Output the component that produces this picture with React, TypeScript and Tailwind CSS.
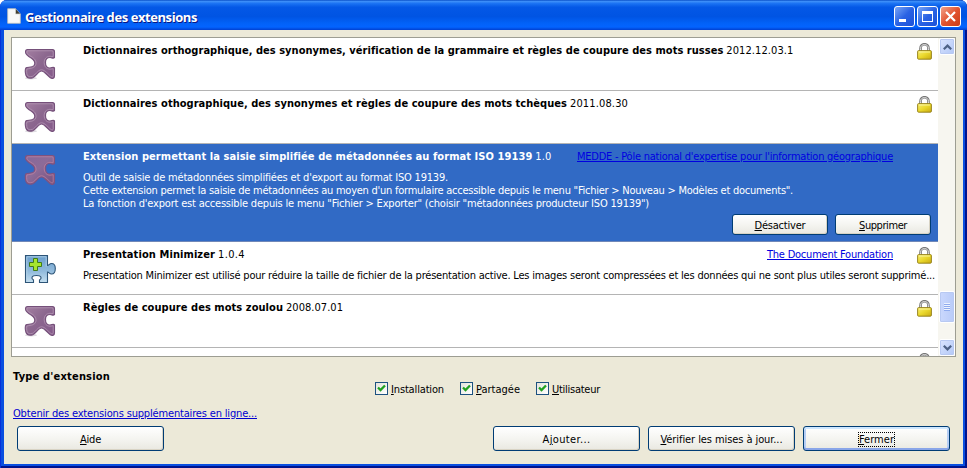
import { useLayoutEffect, useRef, useState, type ReactNode } from 'react';

/** Single line of text whose letter spacing is adjusted so that it spans `width` pixels. */
function Fit({ width, className = '', children }: { width: number; className?: string; children: ReactNode }) {
  const ref = useRef<HTMLSpanElement>(null);
  const [spacing, setSpacing] = useState(0);
  useLayoutEffect(() => {
    const el = ref.current;
    if (!el) return;
    const count = (el.textContent ?? '').length;
    setSpacing((width - el.getBoundingClientRect().width) / count);
  }, [width]);
  return (
    <span ref={ref} className={`inline-block whitespace-pre ${className}`} style={{ letterSpacing: `${spacing}px` }}>
      {children}
    </span>
  );
}

function PurplePuzzle({ selected = false }: { selected?: boolean }) {
  const id = selected ? 'plum-sel' : 'plum';
  return (
    <svg width="32" height="32" viewBox="0 0 32 32" className="block">
      <defs>
        <linearGradient id={id} x1="0" y1="0" x2="1" y2="1">
          <stop offset="0" stopColor={selected ? '#87689a' : '#a47fa2'} />
          <stop offset=".45" stopColor={selected ? '#8d6b98' : '#8c688f'} />
          <stop offset="1" stopColor={selected ? '#75517f' : '#84598a'} />
        </linearGradient>
      </defs>
      {!selected && <ellipse cx="7" cy="30.200" rx="6" ry="1.200" fill="#dedbe0" />}
      <path
        d="M3.500 1.500H28.500Q30.500 1.500 30.500 3.500V9.500C29 11 28 9.500 26 9.500C23 9.500 21.500 11.500 21.500 14.500C21.500 18 23.500 20 26 20C28 20 29 18.500 30.500 19.800V28C30.500 31 27.800 31 26 29.500C23 27.300 20 23 17.500 23C14.500 23 12 28.300 9 29.600C6 30.500 3 30 2 27.500C1 25 1 20.800 2 19.800C4 18.800 8 19.800 10 17.500C12 15 10 11.800 7.500 10.200C4 8.300 1.500 6 1.500 4Q1.500 1.500 3.500 1.500Z"
        fill={`url(#${id})`}
        stroke={selected ? '#80527e' : '#75507a'}
        strokeWidth="1.100"
      />
      <path
        d="M4.200 2.800H28Q29.200 2.800 29.200 4V8.500C28.500 8.900 27.500 8.300 26 8.300C22.300 8.300 20.200 11 20.200 14.500C20.200 18.800 22.800 21.200 26 21.200C27.500 21.200 28.500 20.700 29.200 20.700V28C29.200 29.300 27.800 29 26.800 28.300C24 26.300 21 21.800 17.500 21.800C13.800 21.800 11.300 27.200 8.500 28.300C6 29 4 28.700 3.200 27C2.500 25 2.500 21.800 2.900 21C5 20.300 9 20.800 11 18.300C13.500 14.800 11.300 11 8.200 9.100C5 7.300 2.800 5.500 2.800 4.200Q2.800 2.800 4.200 2.800Z"
        fill="none"
        stroke={selected ? '#ba7f9d' : '#b294b2'}
        strokeWidth=".8"
      />
    </svg>
  );
}

function BluePuzzle() {
  return (
    <svg width="32" height="32" viewBox="0 0 32 32" className="block">
      <defs>
        <linearGradient id="sky" x1="0" y1="0" x2="0" y2="1">
          <stop offset="0" stopColor="#699dcc" />
          <stop offset=".6" stopColor="#94bcdd" />
          <stop offset="1" stopColor="#c4dff0" />
        </linearGradient>
      </defs>
      <path
        d="M1.500 3.500H23.500V13.500C25 13.500 25.300 11.500 27.500 11.500C30 11.500 31.300 13.500 31.300 16.500C31.300 20 30 22 27.500 22C25.300 22 25 20 23.500 20V30.500H15.500V28C18 26.500 18 23.500 12.500 23.500C7 23.500 7 26.500 9.500 28V30.500H1.500Z"
        fill="url(#sky)"
        stroke="#2d5477"
        strokeWidth="1.100"
      />
      <path d="M2.800 29.300V4.800H22.200V14.700" fill="none" stroke="#b9d5ea" strokeWidth=".8" />
      <path d="M9.500 6.500H13.500V10.500H17.500V14.500H13.500V18.500H9.500V14.500H5.500V10.500H9.500Z" fill="#a7e52f" stroke="#417c18" strokeWidth="1" />
    </svg>
  );
}

function Lock() {
  return (
    <svg width="15" height="17" viewBox="0 0 15 17" className="block">
      <defs>
        <linearGradient id="gold" x1="0" y1="0" x2="1" y2="1">
          <stop offset="0" stopColor="#f8ee75" />
          <stop offset=".5" stopColor="#ead82c" />
          <stop offset="1" stopColor="#c9aa12" />
        </linearGradient>
      </defs>
      <path d="M3.500 8V5.500C3.500 -.2 11.500 -.2 11.500 5.500V8" fill="none" stroke="#777" strokeWidth="2.600" />
      <path d="M3.500 8V5.500C3.500 .2 11.500 .2 11.500 5.500V8" fill="none" stroke="#dedede" strokeWidth="1" />
      <rect x=".6" y="7.600" width="13.800" height="8.600" rx="1" fill="url(#gold)" stroke="#8f7a14" strokeWidth=".9" />
      <path d="M2 9H13" stroke="#fdf9b5" strokeWidth=".8" />
    </svg>
  );
}

type RowProps = {
  height: string;
  title: string;
  titleWidth: number;
  version: string;
  versionWidth: number;
  link?: string;
  linkWidth?: number;
  locked?: boolean;
  selected?: boolean;
  icon: ReactNode;
  children?: ReactNode;
};

function Row({ height, title, titleWidth, version, versionWidth, link, linkWidth = 0, locked = true, selected = false, icon, children }: RowProps) {
  return (
    <div className={`flex shrink-0 border-b ${height} ${selected ? 'border-[#7088b8] bg-[#316ac5] text-white' : 'border-[#b4b4b4] bg-white'}`}>
      <div className="w-[71px] shrink-0 pt-[10px] pl-3">{icon}</div>
      <div className="relative w-[855px] shrink-0">
        <div className="flex h-[26px] pt-[6px] leading-[14px]">
          <Fit width={titleWidth} className="font-bold">{title}</Fit>
          <Fit width={versionWidth} className="ml-[3px]">{version}</Fit>
          <div className="ml-auto flex pr-[45px]">
            {link && <Fit width={linkWidth} className="text-[#0000e0] underline">{link}</Fit>}
          </div>
        </div>
        {locked && <div className="absolute top-[5px] right-[6px]"><Lock /></div>}
        {children}
      </div>
    </div>
  );
}

function XpButton({ size, focused = false, children }: { size: string; focused?: boolean; children: ReactNode }) {
  return (
    <button
      className={`flex items-center justify-center rounded-[3px] border border-[#003c74] bg-linear-to-b from-white via-[#f5f5f1] to-[#e9e8e1] pt-px ${size} ${
        focused ? 'shadow-[inset_0_2px_0_#cee7ff,inset_0_-2px_0_#89a5e8,inset_2px_0_0_#b6cef4,inset_-2px_0_0_#b6cef4]' : 'shadow-[inset_-1px_-1px_0_#d8d3c4]'
      }`}
    >
      {children}
    </button>
  );
}

function Check({ label, first, width }: { label: string; first: string; width: number }) {
  return (
    <label className="flex items-center">
      <span className="mr-[3px] flex h-[13px] w-[13px] items-center justify-center border border-[#1c5180] bg-linear-to-br from-[#e3e3dc] to-white">
        <svg width="9" height="9" viewBox="0 0 9 9">
          <path d="M1 3.500L3.500 6L8 1.500" fill="none" stroke="#21a121" strokeWidth="2.300" />
        </svg>
      </span>
      <Fit width={width} className="pt-px"><u>{first}</u>{label}</Fit>
    </label>
  );
}

function ScrollButton({ down = false }: { down?: boolean }) {
  return (
    <div className="flex h-[17px] w-[16px] items-center justify-center rounded-[2px] border border-white bg-linear-to-br from-[#dbe5fe] to-[#b3c8f7] shadow-[inset_0_0_0_1px_#b8c9f2]">
      <svg width="9" height="6" viewBox="0 0 9 6">
        <path d={down ? 'M.8 .8L4.500 4.400L8.200 .8' : 'M.8 5.200L4.500 1.600L8.200 5.200'} fill="none" stroke="#4d6185" strokeWidth="2.200" />
      </svg>
    </div>
  );
}

const captionButton = 'flex h-[21px] w-[21px] items-center justify-center rounded-[3px] border border-white';

export default function App() {
  return (
    <div className="h-[468px] w-[967px] overflow-hidden bg-white font-['DejaVu_Sans_Condensed','DejaVu_Sans',sans-serif] text-[11px] leading-[13px] text-black [font-stretch:condensed]">
      <div className="flex h-[468px] flex-col overflow-hidden rounded-t-[7px] bg-[#0a4fe0] shadow-[inset_1px_0_0_#0831d9,inset_-2px_0_0_#00138c,inset_0_-2px_0_#00138c]">
        <header className="flex h-[30px] shrink-0 items-center bg-[linear-gradient(to_bottom,#0a50c8_0%,#3b8df8_5%,#1a72f3_12%,#0458e6_24%,#0054e3_55%,#0262f8_78%,#0364ff_90%,#0140d0_100%)] pt-[3px] pr-[6px] pl-[7px]">
          <svg width="14" height="16" viewBox="0 0 14 16" className="mr-[4px] mb-[2px]">
            <path d="M.7 .7H8.500L13.300 6V15.300H.7Z" fill="#f8f8f8" stroke="#c2c2ba" strokeWidth=".8" />
            <path d="M8.500 .7L13.300 6H8.500Z" fill="#403c30" />
            <path d="M8.500 .7V6H13.300" fill="none" stroke="#d7d7d0" strokeWidth=".7" />
          </svg>
          <Fit width={172} className="font-['Open_Sans','Noto_Sans',sans-serif] text-[13px] leading-[16px] font-bold text-white [font-stretch:normal] [text-shadow:1px_1px_0_#0a1883]">Gestionnaire des extensions</Fit>
          <div className="ml-auto flex gap-[2px]">
            <div className={`${captionButton} bg-linear-to-br from-[#7aa5f5] via-[#2a62e4] to-[#1c51d8]`}>
              <svg width="19" height="19" viewBox="0 0 19 19"><path d="M4 12H11V15H4Z" fill="white" /></svg>
            </div>
            <div className={`${captionButton} bg-linear-to-br from-[#7aa5f5] via-[#2a62e4] to-[#1c51d8]`}>
              <svg width="19" height="19" viewBox="0 0 19 19"><path d="M4 4H15V15H4ZM5 7V14H14V7Z" fill="white" fillRule="evenodd" /></svg>
            </div>
            <div className={`${captionButton} bg-linear-to-br from-[#f0a088] via-[#e2532f] to-[#cb3c16]`}>
              <svg width="19" height="19" viewBox="0 0 19 19"><path d="M5 5L14 14M14 5L5 14" stroke="white" strokeWidth="2.200" /></svg>
            </div>
          </div>
        </header>

        <main className="mx-1 mb-1 flex min-h-0 flex-1 flex-col bg-[#ece9d8] pt-[7px]">
          <section className="ml-[7px] flex h-[320px] w-[945px] shrink-0 overflow-hidden border border-[#9d9d92] bg-white">
            <div className="flex w-[926px] shrink-0 flex-col overflow-hidden">
              <Row height="h-[53px]" icon={<PurplePuzzle />} title="Dictionnaires orthographique, des synonymes, vérification de la grammaire et règles de coupure des mots russes" titleWidth={640} version="2012.12.03.1" versionWidth={67} />
              <Row height="h-[53px]" icon={<PurplePuzzle />} title="Dictionnaires othographique, des synonymes et règles de coupure des mots tchèques" titleWidth={484} version="2011.08.30" versionWidth={58} />
              <Row height="h-[98px]" selected locked={false} icon={<PurplePuzzle selected />} title="Extension permettant la saisie simplifiée de métadonnées au format ISO 19139" titleWidth={449} version="1.0" versionWidth={16} link="MEDDE - Pôle national d'expertise pour l'information géographique" linkWidth={316}>
                <div className="flex h-[44px] flex-col items-start pt-[1px]">
                  <Fit width={365}>Outil de saisie de métadonnées simplifiées et d'export au format ISO 19139.</Fit>
                  <Fit width={710}>Cette extension permet la saisie de métadonnées au moyen d'un formulaire accessible depuis le menu "Fichier &gt; Nouveau &gt; Modèles et documents".</Fit>
                  <Fit width={566}>La fonction d'export est accessible depuis le menu "Fichier &gt; Exporter" (choisir "métadonnées producteur ISO 19139")</Fit>
                </div>
                <div className="flex justify-end gap-[7px] pr-[7px] text-black">
                  <XpButton size="h-[21px] w-[96px]"><Fit width={51}><u>D</u>ésactiver</Fit></XpButton>
                  <XpButton size="h-[21px] w-[96px]"><Fit width={48}><u>S</u>upprimer</Fit></XpButton>
                </div>
              </Row>
              <Row height="h-[53px]" icon={<BluePuzzle />} title="Presentation Minimizer" titleWidth={132} version="1.0.4" versionWidth={27} link="The Document Foundation" linkWidth={126}>
                <div className="pt-[1px]">
                  <Fit width={852}>Presentation Minimizer est utilisé pour réduire la taille de fichier de la présentation active. Les images seront compressées et les données qui ne sont plus utiles seront supprimé...</Fit>
                </div>
              </Row>
              <Row height="h-[53px]" icon={<PurplePuzzle />} title="Règles de coupure des mots zoulou" titleWidth={200} version="2008.07.01" versionWidth={57} />
              <Row height="h-[53px]" icon={<BluePuzzle />} title="Report Builder" titleWidth={84} version="1.0" versionWidth={16} link="The Document Foundation" linkWidth={126} />
            </div>
            <div className="flex w-[17px] flex-col items-end bg-[#f7f6f0]">
              <ScrollButton />
              <div className="h-[236px]" />
              <div className="flex h-[32px] w-[16px] flex-col items-center justify-center gap-px rounded-[2px] border border-white bg-linear-to-r from-[#cad8fd] to-[#b9cbf8] shadow-[inset_0_0_0_1px_#b8c9f2]">
                {[0, 1, 2, 3].map((n) => (
                  <div key={n} className="h-px w-[6px] bg-[#8fabee] shadow-[0_-1px_0_#eef4fe]" />
                ))}
              </div>
              <div className="mt-auto"><ScrollButton down /></div>
            </div>
          </section>

          <div className="h-[19px] shrink-0 pt-[13px] pl-[9px]">
            <Fit width={97} className="font-bold">Type d'extension</Fit>
          </div>
          <div className="flex h-[24px] shrink-0 items-center pt-[1px] pl-[371px]">
            <div className="w-[85px]"><Check first="I" label="nstallation" width={53} /></div>
            <div className="w-[76px]"><Check first="P" label="artagée" width={44} /></div>
            <Check first="U" label="tilisateur" width={48} />
          </div>
          <div className="h-[26px] shrink-0 pt-[7px] pl-[9px] text-[#0000d0]">
            <Fit width={244} className="underline">Obtenir des extensions supplémentaires en ligne...</Fit>
          </div>
          <footer className="flex gap-2 pr-[13px] pl-[13px]">
            <XpButton size="mr-auto h-[25px] w-[147px]"><Fit width={21}><u>A</u>ide</Fit></XpButton>
            <XpButton size="h-[25px] w-[147px]"><Fit width={48}>A<u>j</u>outer...</Fit></XpButton>
            <XpButton size="h-[25px] w-[147px]"><Fit width={122}><u>V</u>érifier les mises à jour...</Fit></XpButton>
            <XpButton size="h-[25px] w-[147px]" focused>
              <span className="border border-dotted border-black"><Fit width={35}><u>F</u>ermer</Fit></span>
            </XpButton>
          </footer>
        </main>
      </div>
    </div>
  );
}
